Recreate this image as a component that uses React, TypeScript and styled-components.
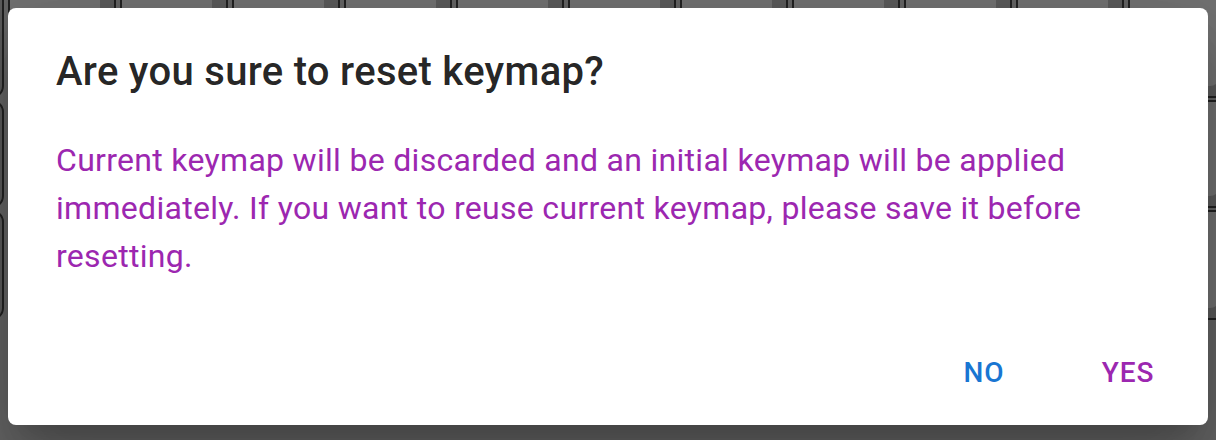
import React from "react";
import styled, { createGlobalStyle } from "styled-components";

const GlobalStyle = createGlobalStyle`
  html, body { margin: 0; padding: 0; }
  body { background: #d0d0d0; font-family: Roboto, "Liberation Sans", sans-serif; }
`;

const Stage = styled.div`
  position: relative;
  width: 1216px;
  height: 440px;
  overflow: hidden;
  background: #cccccc;
`;

const Keyboard = styled.div`
  display: flex;
  flex-direction: column;
  gap: 2px;
  margin-top: -12px;
  margin-left: -104px;
`;

const KeyRow = styled.div<{ $shift: number }>`
  display: flex;
  gap: 4px;
  padding-left: ${(p) => p.$shift}px;
`;

const Key = styled.div<{ $w: number; $h: number }>`
  flex: none;
  width: ${(p) => p.$w}px;
  height: ${(p) => p.$h}px;
  box-sizing: border-box;
  border: 2px solid #444;
  border-radius: 12px;
  background: #e6e6e6;
  box-shadow: inset -14px -10px 0 #b8b8b8;
`;

const Backdrop = styled.div`
  position: absolute;
  inset: 0;
  background: rgba(0, 0, 0, 0.5);
  display: flex;
  align-items: flex-start;
  justify-content: center;
  padding-top: 8px;
`;

const Dialog = styled.div`
  width: 1200px;
  background: #ffffff;
  border-radius: 8px;
  box-shadow: 0 22px 30px -14px rgba(0, 0, 0, 0.2),
    0 48px 76px 6px rgba(0, 0, 0, 0.14), 0 18px 92px 16px rgba(0, 0, 0, 0.12);
  display: flex;
  flex-direction: column;
`;

const Title = styled.h2`
  margin: 0;
  padding: 32px 48px;
  font-family: Roboto, "Liberation Sans", sans-serif;
  font-weight: 500;
  font-size: 40px;
  line-height: 64px;
  letter-spacing: 0.0075em;
  color: rgba(0, 0, 0, 0.87);
`;

const Content = styled.div`
  padding: 0 48px 40px;
`;

const ContentText = styled.p`
  margin: 0;
  font-family: Roboto, "Liberation Sans", sans-serif;
  font-weight: 400;
  font-size: 32px;
  line-height: 48px;
  letter-spacing: 0.00938em;
  color: #9c27b0;
`;

const Actions = styled.div`
  display: flex;
  justify-content: flex-end;
  align-items: center;
  gap: 16px;
  padding: 16px;
`;

const Button = styled.button<{ $color: string }>`
  min-width: 128px;
  padding: 12px 16px;
  border: 0;
  border-radius: 8px;
  background: transparent;
  font-family: Roboto, "Liberation Sans", sans-serif;
  font-weight: 500;
  font-size: 28px;
  line-height: 1.75;
  letter-spacing: 0.02857em;
  text-transform: uppercase;
  color: ${(p) => p.$color};
  cursor: pointer;
`;

const rows = [
  { shift: 0, h: 110, keys: Array(12).fill(108) },
  { shift: 0, h: 108, keys: Array(12).fill(108) },
  { shift: 0, h: 110, keys: Array(12).fill(108) },
];

export default function App() {
  return (
    <>
      <GlobalStyle />
      <Stage>
        <Keyboard>
          {rows.map((r, i) => (
            <KeyRow key={i} $shift={r.shift}>
              {r.keys.map((w, j) => (
                <Key key={j} $w={w} $h={r.h} />
              ))}
            </KeyRow>
          ))}
        </Keyboard>
        <Backdrop>
          <Dialog role="dialog" aria-labelledby="reset-title">
            <Title id="reset-title">Are you sure to reset keymap?</Title>
            <Content>
              <ContentText>
                Current keymap will be discarded and an initial keymap will be
                applied immediately. If you want to reuse current keymap,
                please save it before resetting.
              </ContentText>
            </Content>
            <Actions>
              <Button $color="#1976d2">No</Button>
              <Button $color="#9c27b0">Yes</Button>
            </Actions>
          </Dialog>
        </Backdrop>
      </Stage>
    </>
  );
}
